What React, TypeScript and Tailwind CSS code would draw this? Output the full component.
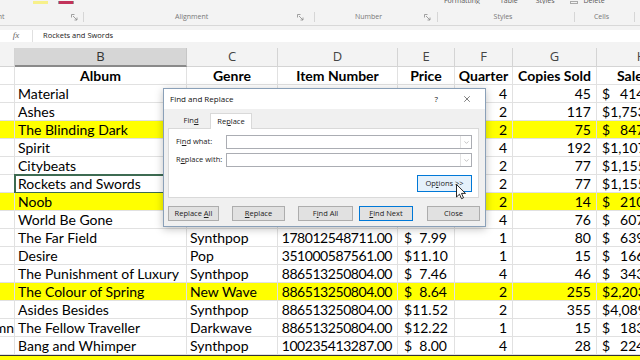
import { ChevronDown, X } from 'lucide-react'

type Row = {
  album: string
  genre: string
  item: string
  price: string
  q: number | string
  copies: number | string
  sales: string
  hl?: boolean
  a?: string
}

const rows: Row[] = [
  { album: 'Material', genre: 'Synthpop', item: '886513250804.00', price: '9.21', q: 4, copies: 45, sales: '414.45' },
  { album: 'Ashes', genre: 'Darkwave', item: '886513250804.00', price: '14.99', q: 2, copies: 117, sales: '1,753.83' },
  { album: 'The Blinding Dark', genre: 'Darkwave', item: '886513250804.00', price: '11.30', q: 2, copies: 75, sales: '847.50', hl: true },
  { album: 'Spirit', genre: 'Synthpop', item: '886513250804.00', price: '5.77', q: 4, copies: 192, sales: '1,107.84' },
  { album: 'Citybeats', genre: 'Synthpop', item: '886513250804.00', price: '15.00', q: 2, copies: 77, sales: '1,155.00' },
  { album: 'Rockets and Swords', genre: 'Synthpop', item: '886513250804.00', price: '15.00', q: 2, copies: 77, sales: '1,155.00' },
  { album: 'Noob', genre: 'Synthpop', item: '886513250804.00', price: '15.00', q: 2, copies: 14, sales: '210.00', hl: true },
  { album: 'World Be Gone', genre: 'Synthpop', item: '886513250804.00', price: '7.99', q: 4, copies: 76, sales: '607.24' },
  { album: 'The Far Field', genre: 'Synthpop', item: '178012548711.00', price: '7.99', q: 1, copies: 80, sales: '639.20' },
  { album: 'Desire', genre: 'Pop', item: '351000587561.00', price: '11.10', q: 1, copies: 15, sales: '166.50' },
  { album: 'The Punishment of Luxury', genre: 'Synthpop', item: '886513250804.00', price: '7.46', q: 4, copies: 46, sales: '343.16' },
  { album: 'The Colour of Spring', genre: 'New Wave', item: '886513250804.00', price: '8.64', q: 2, copies: 255, sales: '2,203.20', hl: true },
  { album: 'Asides Besides', genre: 'Synthpop', item: '886513250804.00', price: '11.52', q: 2, copies: 355, sales: '4,089.60' },
  { album: 'The Fellow Traveller', genre: 'Darkwave', item: '886513250804.00', price: '12.22', q: 1, copies: 15, sales: '183.30', a: 'mn' },
  { album: 'Bang and Whimper', genre: 'Synthpop', item: '100235413287.00', price: '8.00', q: 4, copies: 28, sales: '224.00' },
]

const cols = 'grid grid-cols-[15px_172px_91px_120px_57px_58px_84px_90px]'
const cell = 'h-[18px] border-b border-r border-[#e1e1e1] flex items-center overflow-hidden whitespace-nowrap'

function Launcher() {
  return (
    <svg width="7" height="7" viewBox="0 0 7 7" className="text-[#8a8a8a]">
      <path d="M0.5 0.5h3M0.5 0.5v3M2 2l4 4M3.5 6h2.5v-2.5" fill="none" stroke="currentColor" strokeWidth="0.8" />
    </svg>
  )
}

function Btn({ children, w, def }: { children: React.ReactNode; w: string; def?: boolean }) {
  return (
    <div
      className={`${w} flex h-[15px] items-center justify-center border bg-[#e1e1e1] text-[7.5px] text-[#222] ${
        def ? 'border-[#0078d7]' : 'border-[#adadad]'
      }`}
    >
      <span>{children}</span>
    </div>
  )
}

function Field({ label }: { label: React.ReactNode }) {
  return (
    <div className="flex items-center">
      <div className="w-[50px] text-[7.5px] text-[#222]">{label}</div>
      <div className="flex h-[14px] flex-1 items-center justify-end border border-[#abadb3] bg-white">
        <div className="flex h-full w-[11px] items-center justify-center border-l border-[#e3e3e3] text-[#999]">
          <ChevronDown size={7} strokeWidth={2} />
        </div>
      </div>
    </div>
  )
}

export default function App() {
  return (
    <div className="relative h-[360px] w-[640px] overflow-hidden bg-white font-['Lato',sans-serif] text-black">
      {/* ribbon */}
      <div className="h-[26px] border-b border-[#d8d8d8] bg-[#f3f3f3] font-['Open_Sans',sans-serif]">
        <div className="flex h-[4px] items-end overflow-hidden">
          <div className="ml-[33px] h-[3px] w-[15px] bg-[#f7f08a]" />
          <div className="ml-[10px] h-[3px] w-[16px] border-x border-[#999] bg-[#c2325a]" />
          <div className="ml-[370px] text-[7px] leading-[7px] text-[#555]">Formatting</div>
          <div className="ml-[20px] text-[7px] leading-[7px] text-[#555]">Table</div>
          <div className="ml-[18px] text-[7px] leading-[7px] text-[#555]">Styles</div>
          <div className="ml-[15px] h-[3px] w-[8px] border border-[#aaa]" />
          <div className="ml-[6px] text-[7px] leading-[7px] text-[#555]">Delete</div>
        </div>
        <div className="mt-[8px] flex h-[10px] text-[7px] leading-[10px] text-[#777]">
          <div className="flex w-[84px] items-center justify-between border-r border-[#d6d6d6] pr-[5px]">
            <span className="-ml-[10px]">Font</span>
            <Launcher />
          </div>
          <div className="flex w-[231px] items-center border-r border-[#d6d6d6] pr-[10px]">
            <span className="ml-[91px]">Alignment</span>
            <span className="ml-auto"><Launcher /></span>
          </div>
          <div className="flex w-[123px] items-center border-r border-[#d6d6d6] pr-[6px]">
            <span className="ml-[40px]">Number</span>
            <span className="ml-auto"><Launcher /></span>
          </div>
          <div className="flex w-[137px] items-center justify-center border-r border-[#d6d6d6] pr-[6px]">Styles</div>
          <div className="flex w-[60px] items-center justify-center border-r border-[#d6d6d6] pr-[6px]">Cells</div>
        </div>
      </div>

      {/* formula bar */}
      <div className="bg-[#f3f3f3] pt-[4px] pb-[6px]">
        <div className="flex h-[12px] items-center bg-white">
          <div className="flex h-full w-[33px] items-center justify-center border-r border-[#e0e0e0] font-['Liberation_Serif',serif] text-[9px] italic text-[#666]">
            fx
          </div>
          <div className="pl-[10px] font-['Open_Sans',sans-serif] text-[7.5px] text-[#222]">Rockets and Swords</div>
        </div>
      </div>

      {/* sheet */}
      <div className={`${cols} w-[687px] font-['Open_Sans',sans-serif] text-[13px] text-[#444]`}>
        <div className="flex h-[19px] items-center justify-center border-b border-r border-[#d4d4d4] bg-[#f3f3f3]" />
        <div className="flex h-[19px] items-center justify-center border-b-2 border-r border-b-[#8a8a8a] border-r-[#c6c6c6] bg-[#d6d6d6] text-[#333]">B</div>
        {['C', 'D', 'E', 'F', 'G', 'H'].map((c) => (
          <div key={c} className="flex h-[19px] items-center justify-center border-b border-r border-[#d4d4d4] bg-[#f3f3f3]">
            {c}
          </div>
        ))}
      </div>

      <div className={`${cols} w-[687px] text-[14px]`}>
        <div className={cell} />
        <div className={`${cell} justify-center font-bold`}>Album</div>
        <div className={`${cell} justify-center font-bold`}>Genre</div>
        <div className={`${cell} justify-center font-bold`}>Item Number</div>
        <div className={`${cell} justify-center font-bold`}>Price</div>
        <div className={`${cell} justify-center font-bold`}>Quarter</div>
        <div className={`${cell} justify-center font-bold`}>Copies Sold</div>
        <div className={`${cell} pl-[20px] font-bold`}>Sales</div>

        {rows.map((r) => {
          const bg = r.hl ? 'bg-[#ffff00]' : ''
          return (
            <div key={r.album} className="contents">
              <div className={`${cell} justify-end ${bg}`}>{r.a ?? ''}</div>
              <div
                className={`${cell} pl-[3px] ${bg} ${
                  r.album === 'Rockets and Swords' ? 'outline-2 -outline-offset-1 outline-[#3d6b52]' : ''
                }`}
              >
                {r.album}
              </div>
              <div className={`${cell} pl-[3px] ${bg}`}>{r.genre}</div>
              <div className={`${cell} justify-end pr-[5px] tracking-[-0.45px] ${bg}`}>{r.item}</div>
              <div className={`${cell} justify-between pl-[6px] pr-[7px] ${bg}`}>
                <span>$</span>
                <span>{r.price}</span>
              </div>
              <div className={`${cell} justify-end pr-[5px] ${bg}`}>{r.q}</div>
              <div className={`${cell} justify-end pr-[5px] ${bg}`}>{r.copies}</div>
              <div className={`${cell} justify-between pl-[5px] pr-[22px] ${bg}`}>
                <span>$</span>
                <span>{r.sales}</span>
              </div>
            </div>
          )
        })}
        <div className="col-span-8 h-[18px] border-t border-[#333] bg-[#ffff00]" />
      </div>

      {/* dialog */}
      <div className="absolute left-[163px] top-[88px] flex h-[139px] w-[323px] flex-col border border-[#8aa0b8] bg-white font-['Open_Sans',sans-serif] shadow-[0_2px_8px_rgba(0,0,0,0.25)]">
        <div className="flex h-[20px] items-center justify-between pl-[6px] pr-[13px] text-[8px] text-[#111]">
          <span>Find and Replace</span>
          <div className="flex items-center gap-[24px]">
            <span className="text-[8px]">?</span>
            <X size={10} strokeWidth={1.3} />
          </div>
        </div>
        <div className="flex flex-1 flex-col bg-[#f0f0f0] px-[4px] pt-[4px]">
          <div className="relative z-10 -mb-px flex h-[16px] pl-[4px] text-[7.5px] text-[#222]">
            <div className="flex w-[38px] items-center justify-center">
              <span>Fin<span className="underline">d</span></span>
            </div>
            <div className="flex w-[42px] items-center justify-center border-x border-t border-[#d9d9d9] bg-white">
              <span>Re<span className="underline">p</span>lace</span>
            </div>
          </div>
          <div className="mr-[2px] flex h-[70px] flex-col border border-[#d9d9d9] bg-white pl-[7px] pr-[6px] pt-[6px]">
            <div className="flex flex-col gap-[4px]">
              <Field label={<>Fi<span className="underline">n</span>d what:</>} />
              <Field label={<>R<span className="underline">e</span>place with:</>} />
            </div>
            <div className="mt-[8px] flex justify-end">
              <div className="flex h-[17px] w-[55px] items-center justify-center border border-[#0078d7] bg-[#e5f1fb] text-[7.5px] text-[#222]">
                <span>Op<span className="underline">t</span>ions &gt;&gt;</span>
              </div>
            </div>
          </div>
          <div className="mt-[8px] flex items-center">
            <Btn w="w-[51px]">Replace <span className="underline">A</span>ll</Btn>
            <div className="ml-[13px]">
              <Btn w="w-[53px]"><span className="underline">R</span>eplace</Btn>
            </div>
            <div className="ml-[13px]">
              <Btn w="w-[55px]">F<span className="underline">i</span>nd All</Btn>
            </div>
            <div className="ml-[6px]">
              <Btn w="w-[54px]" def><span className="underline">F</span>ind Next</Btn>
            </div>
            <div className="ml-[14px]">
              <Btn w="w-[53px]">Close</Btn>
            </div>
          </div>
        </div>
      </div>

      {/* mouse pointer */}
      <svg className="absolute left-[456px] top-[184px]" width="10" height="16" viewBox="0 0 10 16">
        <path d="M0.5 0.5v12.5l3-2.8 2 4.5 2-0.9-2-4.4h4z" fill="white" stroke="#111" strokeWidth="0.9" strokeLinejoin="round" />
      </svg>
    </div>
  )
}
